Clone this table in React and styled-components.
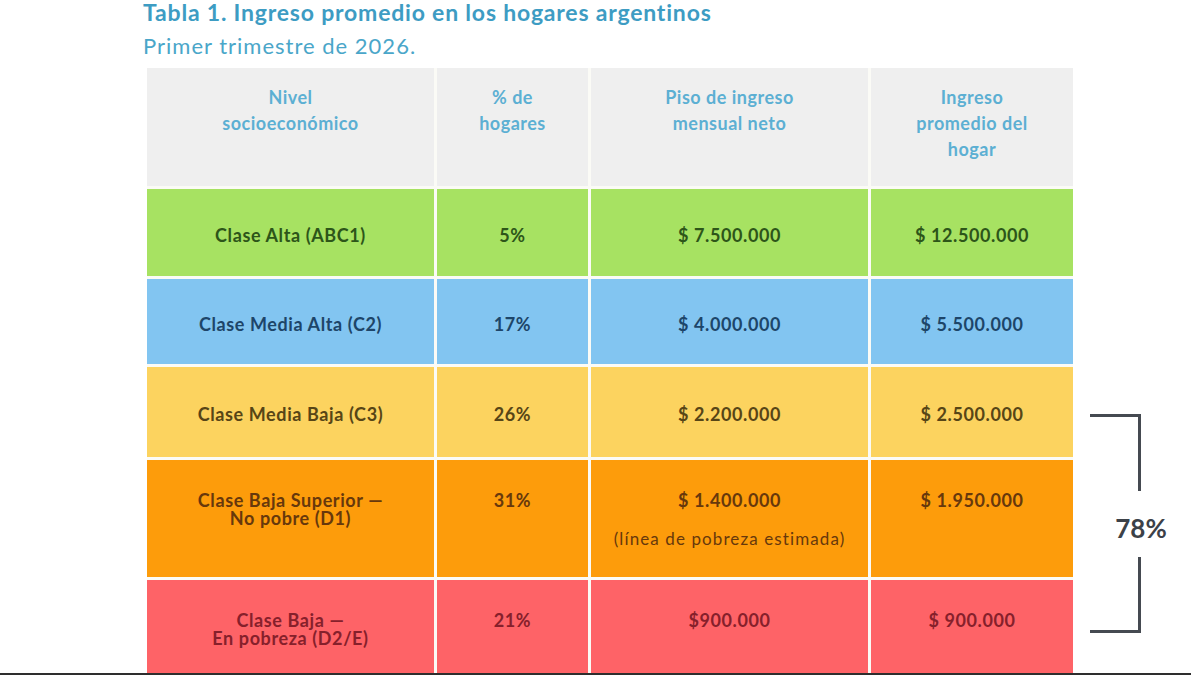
import React from "react";
import styled, { createGlobalStyle } from "styled-components";

const GlobalStyle = createGlobalStyle`
  html, body {
    margin: 0;
    padding: 0;
    background: #ffffff;
  }
  body {
    font-family: Lato, "Open Sans", "Liberation Sans", sans-serif;
  }
`;

const Screen = styled.div`
  width: 1191px;
  height: 675px;
  display: flex;
  flex-direction: column;
  overflow: hidden;
  background: #ffffff;
`;

const Page = styled.div`
  flex: 1;
  overflow: hidden;
  padding-left: 143px;
`;

const BottomBar = styled.div`
  height: 2px;
  background: #2e2e2e;
`;

const Title = styled.h1`
  margin: 0;
  font-size: 23px;
  line-height: 24px;
  font-weight: 700;
  letter-spacing: 0.8px;
  color: #3d9cc3;
`;

const Subtitle = styled.h2`
  margin: 9px 0 0;
  font-size: 22px;
  line-height: 26px;
  font-weight: 400;
  letter-spacing: 1px;
  color: #4aa6c9;
`;

const Body = styled.div`
  display: flex;
  align-items: flex-start;
  margin-top: 9px;
  margin-left: 4px;
`;

const Table = styled.div`
  display: grid;
  grid-template-columns: 287px 151px 277px 202px;
  grid-template-rows: 118px 87px 85px 90px 117px 100px;
  gap: 3px;
  background: #fbfbf6;
`;

const HeadCell = styled.div`
  background: #efefef;
  color: #5cafd3;
  font-size: 18px;
  line-height: 26px;
  font-weight: 700;
  letter-spacing: 0.5px;
  text-align: center;
  padding-top: 16px;
`;

const Cell = styled.div`
  background: ${({ bg }) => bg};
  color: ${({ fg }) => fg};
  display: flex;
  flex-direction: column;
  align-items: center;
  justify-content: ${({ top }) => (top ? "flex-start" : "center")};
  padding-top: ${({ top }) => (top ? "31px" : "4px")};
  text-align: center;
  font-size: 18px;
  line-height: 18px;
  font-weight: 700;
  letter-spacing: 0.6px;
`;

const Note = styled.span`
  margin-top: 21px;
  font-size: 17px;
  font-weight: 400;
  letter-spacing: 1.1px;
`;

const Aside = styled.div`
  display: flex;
  flex-direction: column;
  padding-top: 346px;
  padding-left: 17px;
`;

const BracketTop = styled.div`
  width: 48px;
  height: 74px;
  border-top: 3px solid #454a51;
  border-right: 3px solid #454a51;
`;

const BracketBottom = styled.div`
  width: 48px;
  height: 73px;
  border-bottom: 3px solid #454a51;
  border-right: 3px solid #454a51;
`;

const Total = styled.div`
  margin: 22px 0 14px 23px;
  width: 56px;
  text-align: center;
  font-size: 26px;
  line-height: 30px;
  font-weight: 700;
  color: #3c4148;
`;

const headers = [
  ["Nivel", "socioeconómico"],
  ["% de", "hogares"],
  ["Piso de ingreso", "mensual neto"],
  ["Ingreso", "promedio del", "hogar"],
];

const rows = [
  {
    bg: "#a7e262",
    fg: "#2d5519",
    cells: [["Clase Alta (ABC1)"], ["5%"], ["$ 7.500.000"], ["$ 12.500.000"]],
  },
  {
    bg: "#82c5f1",
    fg: "#1d4569",
    cells: [["Clase Media Alta (C2)"], ["17%"], ["$ 4.000.000"], ["$ 5.500.000"]],
  },
  {
    bg: "#fcd35f",
    fg: "#574516",
    cells: [["Clase Media Baja (C3)"], ["26%"], ["$ 2.200.000"], ["$ 2.500.000"]],
  },
  {
    bg: "#fd9c0b",
    fg: "#67380c",
    top: true,
    note: "(línea de pobreza estimada)",
    cells: [["Clase Baja Superior —", "No pobre (D1)"], ["31%"], ["$ 1.400.000"], ["$ 1.950.000"]],
  },
  {
    bg: "#fe6367",
    fg: "#86202b",
    top: true,
    cells: [["Clase Baja —", "En pobreza (D2/E)"], ["21%"], ["$900.000"], ["$ 900.000"]],
  },
];

function Lines({ lines }) {
  return lines.map((line, i) => (
    <React.Fragment key={i}>
      {i > 0 && <br />}
      {line}
    </React.Fragment>
  ));
}

export default function App() {
  return (
    <Screen>
      <GlobalStyle />
      <Page>
        <Title>Tabla 1. Ingreso promedio en los hogares argentinos</Title>
        <Subtitle>Primer trimestre de 2026.</Subtitle>
        <Body>
          <Table>
            {headers.map((h, i) => (
              <HeadCell key={i}>
                <Lines lines={h} />
              </HeadCell>
            ))}
            {rows.map((row, r) =>
              row.cells.map((c, i) => (
                <Cell key={`${r}-${i}`} bg={row.bg} fg={row.fg} top={row.top}>
                  <div>
                    <Lines lines={c} />
                  </div>
                  {i === 2 && row.note && <Note>{row.note}</Note>}
                </Cell>
              ))
            )}
          </Table>
          <Aside>
            <BracketTop />
            <Total>78%</Total>
            <BracketBottom />
          </Aside>
        </Body>
      </Page>
      <BottomBar />
    </Screen>
  );
}
